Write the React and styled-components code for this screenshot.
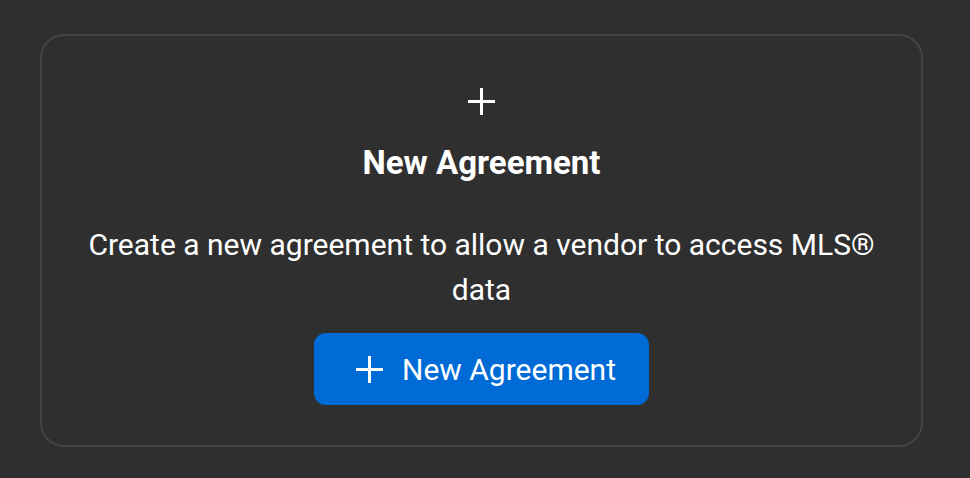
import styled, { createGlobalStyle } from "styled-components";

const GlobalStyle = createGlobalStyle`
  html, body {
    margin: 0;
    padding: 0;
    background-color: #2f2f2f;
    font-family: Roboto, "Liberation Sans", sans-serif;
  }
`;

const Page = styled.div`
  padding: 34px 47px 30px 40px;
  box-sizing: border-box;
  width: 970px;
  height: 478px;
`;

const Card = styled.section`
  display: flex;
  flex-direction: column;
  align-items: center;
  border: 2px solid #444444;
  border-radius: 24px;
  padding: 52px 40px 40px;
  color: #ffffff;
  text-align: center;
`;

const PlusIcon = () => (
  <svg width="27" height="27" viewBox="0 0 27 27" fill="none">
    <path d="M13.5 0v27M0 13.5h27" stroke="currentColor" strokeWidth="3" />
  </svg>
);

const Title = styled.h2`
  margin: 28px 0 0;
  font-size: 33px;
  font-weight: 700;
  line-height: normal;
`;

const Description = styled.p`
  margin: 40px 0 0;
  font-size: 30px;
  line-height: 45px;
  max-width: 800px;
`;

const Button = styled.button`
  margin-top: 21px;
  display: flex;
  align-items: center;
  gap: 19px;
  height: 72px;
  padding: 0 33px 0 42px;
  border: none;
  border-radius: 12px;
  background-color: #006bd6;
  color: #ffffff;
  font-family: inherit;
  font-size: 30px;
  cursor: pointer;
`;

const App = () => {
  return (
    <Page>
      <GlobalStyle />
      <Card>
        <PlusIcon />
        <Title>New Agreement</Title>
        <Description>
          Create a new agreement to allow a vendor to access MLS® data
        </Description>
        <Button type="button">
          <PlusIcon />
          New Agreement
        </Button>
      </Card>
    </Page>
  );
};

export default App;
